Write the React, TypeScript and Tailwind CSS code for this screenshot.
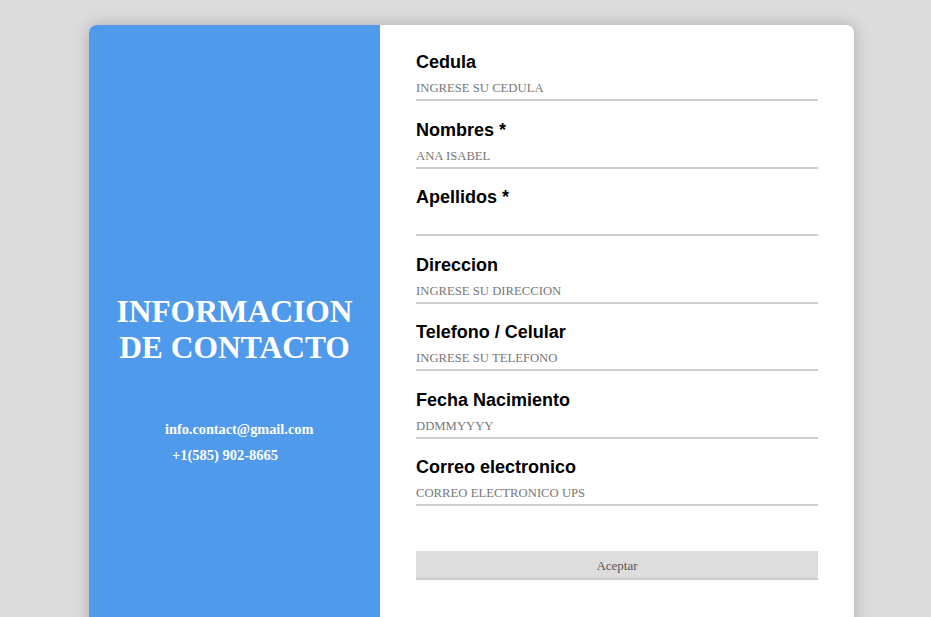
import React from "react";

const fields = [
  { label: "Cedula", placeholder: "INGRESE SU CEDULA" },
  { label: "Nombres *", placeholder: "ANA ISABEL" },
  { label: "Apellidos *", placeholder: "" },
  { label: "Direccion", placeholder: "INGRESE SU DIRECCION" },
  { label: "Telefono / Celular", placeholder: "INGRESE SU TELEFONO" },
  { label: "Fecha Nacimiento", placeholder: "DDMMYYYY" },
  { label: "Correo electronico", placeholder: "CORREO ELECTRONICO UPS" },
];

export default function App() {
  return (
    <div className="min-h-screen w-full overflow-hidden bg-[#dcdcdc] pt-[25px]">
      <div className="ml-[89px] flex h-[620px] w-[765px] overflow-hidden rounded-lg bg-white shadow-[0_0_16px_rgba(0,0,0,0.22)]">
        {/* panel izquierdo */}
        <div className="flex w-[291px] shrink-0 flex-col bg-[#4f9aeb] pt-[269px] text-white [font-family:'Liberation_Serif',serif]">
          <h1 className="text-center text-[31.5px] font-bold leading-[36px]">
            INFORMACION
            <br />
            DE CONTACTO
          </h1>
          <div className="mt-[50px] font-bold leading-[26px]">
            <p className="pl-[76px] text-[14.3px]">info.contact@gmail.com</p>
            <p className="pl-[83px] text-[14.5px]">+1(585) 902-8665</p>
          </div>
        </div>

        {/* formulario */}
        <form className="flex flex-1 flex-col px-[36px] pt-[27px]">
          {fields.map((f) => (
            <div key={f.label} className="mb-[18.5px] flex flex-col">
              <label className="text-[18px] font-bold leading-[21px] text-black [font-family:'Liberation_Sans',sans-serif]">
                {f.label}
              </label>
              <input
                type="text"
                placeholder={f.placeholder}
                className="mt-px h-[27px] w-full border-b-2 border-[#cfcfcf] bg-transparent pt-[4px] text-[12.7px] uppercase text-[#555] outline-none placeholder:text-[#777] [font-family:'Liberation_Serif',serif]"
              />
            </div>
          ))}
          <button
            type="button"
            className="mt-[26px] h-[29px] w-full border-b-2 border-[#cccccc] bg-[#dddddd] pt-[3px] text-[13px] text-[#555] [font-family:'Liberation_Serif',serif]"
          >
            Aceptar
          </button>
        </form>
      </div>
    </div>
  );
}
